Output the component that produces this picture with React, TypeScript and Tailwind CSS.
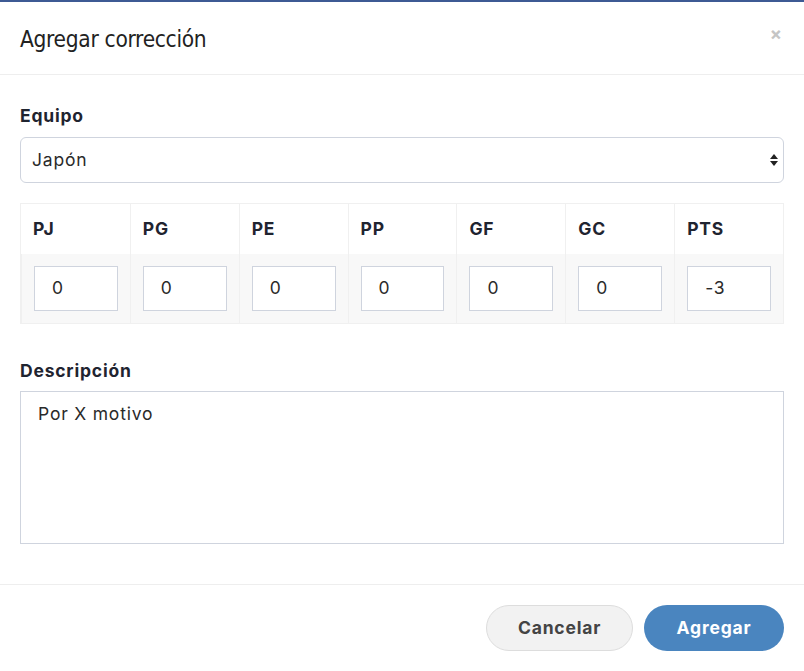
import React from "react";

const cols = ["PJ", "PG", "PE", "PP", "GF", "GC", "PTS"];
const vals = ["0", "0", "0", "0", "0", "0", "-3"];

export default function App() {
  return (
    <div className="w-[804px] h-[671px] bg-white border-t-2 border-[#3d5a94] flex flex-col" style={{ fontFamily: "Inter, sans-serif" }}>
      <div className="h-[73px] flex items-center justify-between px-5 pt-[3px] border-b border-[#eeeeee]">
        <h1 className="text-[22.5px] text-[#222] tracking-[-0.3px]" style={{ fontFamily: "'Liberation Sans Narrow', 'DejaVu Sans Condensed', sans-serif" }}>Agregar corrección</h1>
        <span className="text-[#c5c5c5] text-[18px] font-bold leading-none mr-[2px] -mt-[12px]">×</span>
      </div>
      <div className="px-5 pt-[30px] flex flex-col">
        <label className="text-[17.5px] font-bold tracking-[0.8px] text-[#1f2430] leading-[22px]">Equipo</label>
        <div className="mt-[10px] h-[46px] border border-[#cfd4de] rounded-[6px] flex items-center justify-between pl-[11px] pr-[4px]">
          <span className="text-[17.5px] tracking-[0.8px] text-[#2a2a2a]">Japón</span>
          <svg width="10" height="14" viewBox="0 0 10 14"><path d="M5 1 L9 6 H1 Z" fill="#222" /><path d="M5 13 L9 8 H1 Z" fill="#222" /></svg>
        </div>
        <div className="mt-[20px] grid grid-cols-7 border border-[#f0f0f0]">
          {cols.map((c) => (
            <div key={c} className="h-[50px] flex items-center px-3 text-[17.5px] tracking-[0.8px] font-bold text-[#1f2430] border-l border-[#f0f0f0] first:border-l-0">{c}</div>
          ))}
          {vals.map((v, i) => (
            <div key={i} className="h-[69px] bg-[#f8f8f8] flex items-center px-3 border-l border-[#f0f0f0] first:border-l-0">
              <div className="w-[86px] h-[45px] bg-white border border-[#cfd4de] flex items-center pl-[17px] text-[17.5px] tracking-[0.8px] text-[#2a2a2a]">{v}</div>
            </div>
          ))}
        </div>
        <label className="mt-[36px] text-[17.5px] tracking-[0.8px] font-bold text-[#1f2430] leading-[22px]">Descripción</label>
        <div className="mt-[9px] h-[153px] border border-[#cfd4de] px-[17px] pt-[9px] text-[17.5px] tracking-[0.8px] text-[#2a2a2a]">Por X motivo</div>
      </div>
      <div className="mt-[40px] border-t border-[#eeeeee] flex justify-end gap-[11px] px-5 pt-[20px]">
        <button className="w-[147px] h-[46px] rounded-full bg-[#f2f2f2] border border-[#dddddd] text-[17.5px] tracking-[0.8px] font-bold text-[#444]">Cancelar</button>
        <button className="w-[140px] h-[46px] rounded-full bg-[#4a85bf] text-[17.5px] tracking-[0.8px] font-bold text-white">Agregar</button>
      </div>
    </div>
  );
}
